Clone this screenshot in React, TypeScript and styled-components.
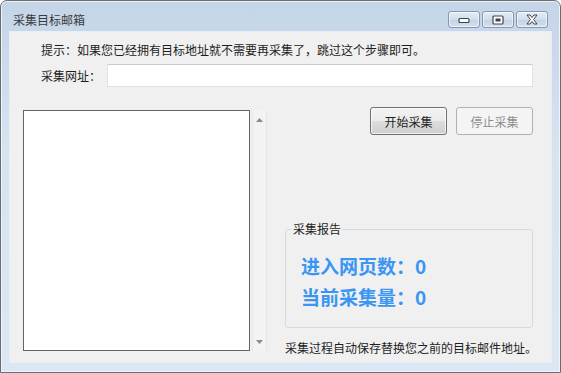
import React, { FC } from 'react'
import styled, { createGlobalStyle } from 'styled-components'

const Global = createGlobalStyle`
  html, body {
    margin: 0;
    padding: 0;
    background: #ffffff;
  }
  body {
    font-family: "Microsoft YaHei", "Noto Sans CJK SC", "Noto Sans", sans-serif;
    font-size: 12px;
    color: #1e1e1e;
  }
`

const MinIcon = () => (
  <svg width="12" height="8" viewBox="0 0 12 8">
    <rect x="1" y="2.5" width="10" height="4" rx="1" fill="#fff" stroke="#3c4450" strokeWidth="1.2" />
  </svg>
)

const MaxIcon = () => (
  <svg width="12" height="10" viewBox="0 0 12 10">
    <rect x="1" y="1" width="10" height="8" rx="1" fill="#fff" stroke="#3c4450" strokeWidth="1.2" />
    <rect x="3.5" y="3.5" width="5" height="3" fill="#3c4450" />
  </svg>
)

const CloseIcon = () => (
  <svg width="14" height="11" viewBox="0 0 14 11">
    <path
      d="M2 1 L5 1 L7 3.5 L9 1 L12 1 L8.6 5.5 L12 10 L9 10 L7 7.5 L5 10 L2 10 L5.4 5.5 Z"
      fill="#fff"
      stroke="#3c4450"
      strokeWidth="1"
      strokeLinejoin="round"
    />
  </svg>
)

const Arrow: FC<{ down?: boolean }> = ({ down }) => (
  <svg width="7" height="4" viewBox="0 0 7 4">
    <path d={down ? 'M0 0 L7 0 L3.5 4 Z' : 'M0 4 L7 4 L3.5 0 Z'} fill="#8a8a8a" />
  </svg>
)

const App: FC = () => {
  const stats = [
    { label: '进入网页数', value: 0 },
    { label: '当前采集量', value: 0 },
  ]

  return (
    <>
      <Global />
      <S.Window>
        <S.TitleBar>
          <S.Title>采集目标邮箱</S.Title>
          <S.Controls>
            <S.CtrlButton><MinIcon /></S.CtrlButton>
            <S.CtrlButton><MaxIcon /></S.CtrlButton>
            <S.CtrlButton><CloseIcon /></S.CtrlButton>
          </S.Controls>
        </S.TitleBar>

        <S.Client>
          <S.Hint>提示：如果您已经拥有目标地址就不需要再采集了，跳过这个步骤即可。</S.Hint>

          <S.UrlRow>
            <S.Label>采集网址：</S.Label>
            <S.Input type="text" />
          </S.UrlRow>

          <S.Main>
            <S.ListArea>
              <S.ListBox />
              <S.ScrollBar>
                <Arrow />
                <Arrow down />
              </S.ScrollBar>
            </S.ListArea>

            <S.Side>
              <S.Buttons>
                <S.Button>开始采集</S.Button>
                <S.Button disabled>停止采集</S.Button>
              </S.Buttons>

              <S.Report>
                <S.Legend>采集报告</S.Legend>
                {stats.map((s) => (
                  <S.Stat key={s.label}>
                    {s.label}：{s.value}
                  </S.Stat>
                ))}
              </S.Report>

              <S.Footer>采集过程自动保存替换您之前的目标邮件地址。</S.Footer>
            </S.Side>
          </S.Main>
        </S.Client>
      </S.Window>
    </>
  )
}

export default App

const S: any = {}

S.Window = styled.div`
  width: 561px;
  height: 373px;
  box-sizing: border-box;
  border: 1px solid #6c6c6c;
  border-radius: 7px 7px 0 0;
  background: linear-gradient(to bottom, #c4d5e8 0%, #d6e3f1 40%, #dbe7f4 100%);
  box-shadow: inset 0 0 0 1px #eef4fb;
  display: flex;
  flex-direction: column;
  padding: 0 8px 9px 8px;
  overflow: hidden;
`

S.TitleBar = styled.div`
  height: 30px;
  flex: none;
  display: flex;
  align-items: flex-start;
  justify-content: space-between;
`

S.Title = styled.div`
  margin: 11px 0 0 4px;
  line-height: 16px;
  font-size: 12px;
  color: #3b3b3b;
`

S.Controls = styled.div`
  display: flex;
  gap: 2px;
  margin: 10px 4px 0 0;
`

S.CtrlButton = styled.div`
  width: 30px;
  height: 15px;
  border: 1px solid #8796ab;
  border-radius: 3px;
  background: linear-gradient(to bottom, #e4ecf6 0%, #d2deec 50%, #c3d2e4 51%, #d4e0ee 100%);
  box-shadow: inset 0 0 0 1px rgba(255, 255, 255, 0.6);
  display: flex;
  align-items: center;
  justify-content: center;
`

S.Client = styled.div`
  flex: 1;
  min-height: 0;
  background: #f0f0f0;
  border: 1px solid #e7eef7;
  display: flex;
  flex-direction: column;
  padding: 10px 18px 0 13px;
`

S.Hint = styled.div`
  margin-left: 18px;
  line-height: 16px;
  white-space: nowrap;
`

S.UrlRow = styled.div`
  display: flex;
  align-items: center;
  margin-top: 6px;
  margin-left: 18px;
`

S.Label = styled.div`
  width: 66px;
  line-height: 16px;
`

S.Input = styled.input`
  flex: 1;
  height: 23px;
  box-sizing: border-box;
  border: 1px solid #e0e2e8;
  border-top-color: #c9cbd2;
  background: #ffffff;
  outline: none;
  margin: 0;
  padding: 0 3px;
`

S.Main = styled.div`
  display: flex;
  margin-top: 20px;
  flex: 1;
`

S.ListArea = styled.div`
  display: flex;
  gap: 2px;
  margin-top: 3px;
  align-self: flex-start;
`

S.ListBox = styled.div`
  width: 227px;
  height: 241px;
  box-sizing: border-box;
  border: 1px solid #646464;
  background: #ffffff;
`

S.ScrollBar = styled.div`
  width: 15px;
  height: 241px;
  box-sizing: border-box;
  background: #f3f3f3;
  border-left: 1px solid #e9e9e9;
  border-right: 1px solid #e6e6e6;
  display: flex;
  flex-direction: column;
  align-items: center;
  justify-content: space-between;
  padding: 8px 0 7px;
`

S.Side = styled.div`
  margin-left: 18px;
  flex: 1;
  min-width: 0;
  display: flex;
  flex-direction: column;
`

S.Buttons = styled.div`
  display: flex;
  justify-content: flex-end;
  gap: 9px;
`

S.Button = styled.button`
  width: 77px;
  height: 28px;
  box-sizing: border-box;
  border: 1px solid #707070;
  border-radius: 3px;
  background: linear-gradient(to bottom, #f3f3f3 0%, #ebebeb 50%, #dddddd 51%, #cfcfcf 100%);
  box-shadow: inset 0 0 0 1px rgba(255, 255, 255, 0.7);
  font-family: inherit;
  font-size: 12px;
  color: #1e1e1e;
  padding: 0;

  &:disabled {
    border-color: #adb2b5;
    background: #f4f4f4;
    box-shadow: none;
    color: #8d8d8d;
  }
`

S.Report = styled.fieldset`
  margin: 86px 0 0;
  height: 107px;
  box-sizing: border-box;
  border: 1px solid #d3dbe2;
  border-radius: 3px;
  padding: 0 0 0 15px;
  min-width: 0;
`

S.Legend = styled.legend`
  padding: 0 2px;
  margin-left: -10px;
  line-height: 16px;
  font-size: 12px;
  color: #1e1e1e;
`

S.Stat = styled.div`
  font-size: 19px;
  font-weight: bold;
  color: #3a96f2;
  line-height: 31px;
  white-space: nowrap;

  &:first-of-type {
    margin-top: 13px;
  }
`

S.Footer = styled.div`
  margin-top: 12px;
  line-height: 16px;
  white-space: nowrap;
`
